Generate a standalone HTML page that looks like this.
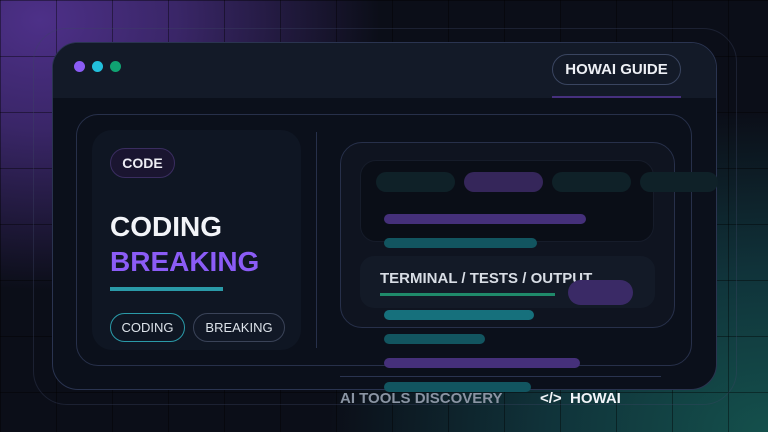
<!DOCTYPE html>
<html><head><style>
*{margin:0;padding:0;box-sizing:border-box}
body{width:768px;height:432px;overflow:hidden;position:relative;font-family:"Liberation Sans",sans-serif;font-weight:bold;
background:radial-gradient(ellipse 340px 270px at 40px 20px,#4d3088 0%,#3a2668 40%,rgba(20,16,35,0) 100%),radial-gradient(ellipse 440px 320px at 768px 432px,#14504c 0%,#10333a 50%,rgba(10,14,22,0) 100%),#0b0e18}
.grid{position:absolute;inset:0;background-image:linear-gradient(to right,rgba(0,0,0,.4) 1px,transparent 1px),linear-gradient(to bottom,rgba(0,0,0,.4) 1px,transparent 1px);background-size:56px 56px}
.a{position:absolute}
.pill{border-radius:999px}
</style></head><body>
<div class="grid"></div>
<div class="a" style="left:33px;top:28px;width:704px;height:377px;border:1px solid rgba(60,70,100,.35);border-radius:34px"></div>
<div class="a" style="left:52px;top:42px;width:665px;height:348px;background:#0b101b;border:1px solid #2a3450;border-radius:26px;overflow:hidden">
  <div class="a" style="left:0;top:0;width:100%;height:55px;background:#131a28"></div>
</div>
<div class="a pill" style="left:74px;top:61px;width:11px;height:11px;background:#8b5cf6"></div>
<div class="a pill" style="left:92px;top:61px;width:11px;height:11px;background:#22c0dc"></div>
<div class="a pill" style="left:110px;top:61px;width:11px;height:11px;background:#10a372"></div>
<div class="a pill" style="left:552px;top:54px;width:129px;height:31px;border:1px solid #3a4560;color:#eef0f5;font-size:15px;line-height:30px;text-align:center">HOWAI GUIDE</div>
<div class="a" style="left:552px;top:96px;width:129px;height:2px;background:#46307e"></div>
<div class="a" style="left:76px;top:114px;width:616px;height:252px;border:1px solid #27304a;border-radius:22px"></div>
<div class="a" style="left:92px;top:130px;width:209px;height:220px;background:#0f1623;border-radius:20px"></div>
<div class="a pill" style="left:110px;top:148px;width:65px;height:30px;background:#1a1530;border:1px solid #3a2d60;color:#eeeef5;font-size:14px;line-height:29px;text-align:center">CODE</div>
<div class="a" style="left:110px;top:211px;font-size:28px;color:#f2f4f8;line-height:32px">CODING</div>
<div class="a" style="left:110px;top:246px;font-size:28px;color:#8b5cf6;line-height:32px">BREAKING</div>
<div class="a" style="left:110px;top:287px;width:113px;height:4px;background:#2a9aa8"></div>
<div class="a pill" style="left:110px;top:313px;width:75px;height:29px;border:1px solid #2a9aa8;color:#dde3ea;font-size:13px;font-weight:normal;line-height:27px;text-align:center">CODING</div>
<div class="a pill" style="left:193px;top:313px;width:92px;height:29px;border:1px solid #3a4358;background:#111826;color:#dde3ea;font-size:13px;font-weight:normal;line-height:27px;text-align:center">BREAKING</div>
<div class="a" style="left:316px;top:132px;width:1px;height:216px;background:#27304a"></div>
<div class="a" style="left:340px;top:142px;width:335px;height:186px;background:#0f1420;border:1px solid #27304a;border-radius:22px"></div>
<div class="a" style="left:360px;top:160px;width:294px;height:82px;background:#0a0e17;border:1px solid #161c2a;border-radius:16px"></div>
<div class="a pill" style="left:376px;top:172px;width:79px;height:20px;background:#0f2128"></div>
<div class="a pill" style="left:464px;top:172px;width:79px;height:20px;background:#35265a"></div>
<div class="a pill" style="left:552px;top:172px;width:79px;height:20px;background:#0f2128"></div>
<div class="a pill" style="left:640px;top:172px;width:78px;height:20px;background:#0f2128"></div>
<div class="a pill" style="left:384px;top:214px;width:202px;height:10px;background:#45307a"></div>
<div class="a pill" style="left:384px;top:238px;width:153px;height:10px;background:#125560"></div>
<div class="a" style="left:360px;top:256px;width:295px;height:52px;background:#131a27;border-radius:14px"></div>
<div class="a" style="left:380px;top:271px;font-size:15px;color:#d8dde5;line-height:16px">TERMINAL / TESTS / OUTPUT</div>
<div class="a" style="left:380px;top:293px;width:175px;height:3px;background:#1f8a6a"></div>
<div class="a pill" style="left:568px;top:280px;width:65px;height:25px;background:#3a2a66"></div>
<div class="a pill" style="left:384px;top:310px;width:150px;height:10px;background:#16707c"></div>
<div class="a pill" style="left:384px;top:334px;width:101px;height:10px;background:#125560"></div>
<div class="a pill" style="left:384px;top:358px;width:196px;height:10px;background:#45307a"></div>
<div class="a" style="left:340px;top:376px;width:321px;height:1px;background:#2a3450"></div>
<div class="a pill" style="left:384px;top:382px;width:147px;height:10px;background:#125560"></div>
<div class="a" style="left:340px;top:391px;font-size:15px;color:#8a94a3;line-height:16px">AI TOOLS DISCOVERY</div>
<div class="a" style="left:540px;top:391px;font-size:15px;color:#f2f4f8;line-height:16px">&lt;/&gt;&nbsp; HOWAI</div>
</body></html>
